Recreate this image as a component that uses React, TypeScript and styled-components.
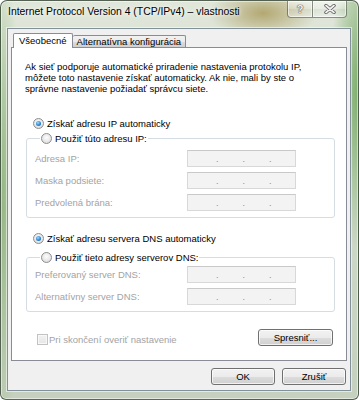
import React from "react";
import styled, { createGlobalStyle } from "styled-components";

const GlobalStyle = createGlobalStyle`
  html, body { margin: 0; padding: 0; background: #ffffff; }
  * { box-sizing: border-box; }
`;

const Window = styled.div`
  width: 359px;
  height: 400px;
  display: flex;
  flex-direction: column;
  padding: 0 7px 8px 6px;
  border: 1px solid rgba(45, 60, 45, 0.75);
  border-radius: 7px 7px 6px 6px;
  background:
    radial-gradient(ellipse 55px 26px at 262px 12px, rgba(168, 152, 88, 0.8), transparent),
    radial-gradient(ellipse 30px 160px at 359px 90px, rgba(110, 165, 92, 0.9), transparent),
    radial-gradient(ellipse 22px 240px at 0px 200px, rgba(135, 175, 115, 0.85), transparent),
    linear-gradient(to bottom, #e0e7da 0%, #d2dccc 35%, #c6d0bf 100%);
  box-shadow: inset 0 0 0 1px rgba(255, 255, 255, 0.5);
  font-family: "Liberation Sans", Arial, sans-serif;
  font-size: 9.5px;
  color: #000;
`;

const TitleBar = styled.div`
  height: 27px;
  display: flex;
  align-items: flex-start;
`;

const Title = styled.div`
  margin: 4px 0 0 1px;
  font-size: 10.4px;
  line-height: 14px;
  white-space: nowrap;
  text-shadow: 0 0 6px rgba(255, 255, 255, 0.95), 0 0 3px rgba(255, 255, 255, 0.9);
`;

const CaptionGroup = styled.div`
  margin: -1px 4px 0 auto;
  display: flex;
`;

const CaptionButton = styled.div<{ $w: number; $side: "left" | "right" }>`
  width: ${(p) => p.$w}px;
  height: 18px;
  display: flex;
  align-items: center;
  justify-content: center;
  border: 1px solid rgba(50, 60, 50, 0.55);
  ${(p) => (p.$side === "left" ? "border-right: none;" : "")}
  border-radius: ${(p) => (p.$side === "left" ? "0 0 0 4px" : "0 0 4px 0")};
  background: linear-gradient(
    to bottom,
    rgba(255, 255, 255, 0.55) 0%,
    rgba(255, 255, 255, 0.25) 50%,
    rgba(210, 215, 205, 0.25) 51%,
    rgba(255, 255, 255, 0.35) 100%
  );
  box-shadow: inset 0 0 0 1px rgba(255, 255, 255, 0.55);
`;

const HelpGlyph = styled.span`
  font-family: "Liberation Sans", Arial, sans-serif;
  font-weight: bold;
  font-size: 11px;
  line-height: 11px;
  color: #f4f4f4;
  text-shadow: 0 0 1px #555, 0 0 1px #555, 0 0 1px #555;
`;

const Client = styled.div`
  flex: 1;
  display: flex;
  flex-direction: column;
  background: #f0f0f0;
  border: 1px solid #82909a;
  box-shadow: 0 0 0 1px rgba(255, 255, 255, 0.55);
  padding: 4px 3px 5px 3px;
`;

const TabStrip = styled.div`
  height: 14px;
  display: flex;
  align-items: flex-end;
  padding-left: 2px;
  position: relative;
  z-index: 1;
`;

const Tab = styled.div<{ $active?: boolean }>`
  height: ${(p) => (p.$active ? 15 : 12)}px;
  margin-bottom: ${(p) => (p.$active ? -1 : 0)}px;
  border: 1px solid #898c95;
  border-bottom: none;
  ${(p) => (p.$active ? "" : "border-left: none;")}
  border-radius: 2px 2px 0 0;
  padding: 0 ${(p) => (p.$active ? 5 : 4)}px;
  display: flex;
  align-items: ${(p) => (p.$active ? "flex-start" : "center")};
  padding-top: ${(p) => (p.$active ? 1 : 0)}px;
  line-height: 11px;
  white-space: nowrap;
  background: ${(p) =>
    p.$active
      ? "#ffffff"
      : "linear-gradient(to bottom, #f2f2f2 0%, #ebebeb 50%, #dddddd 51%, #cfcfcf 100%)"};
`;

const Panel = styled.div`
  flex: 1;
  display: flex;
  flex-direction: column;
  background: #ffffff;
  border: 1px solid #898c95;
  padding: 13px 11px 0 13px;
`;

const Paragraph = styled.p`
  margin: 0;
  line-height: 11px;
  white-space: nowrap;
`;

const OptionRow = styled.label<{ $top: number }>`
  display: flex;
  align-items: center;
  gap: 3px;
  height: 14px;
  margin: ${(p) => p.$top}px 0 0 8px;
  white-space: nowrap;
`;

const Radio = styled.span<{ $checked?: boolean }>`
  flex: none;
  width: 11px;
  height: 11px;
  border-radius: 50%;
  border: 1px solid #8c8e8e;
  background: radial-gradient(circle at 50% 40%, #fdfdfd 0%, #e8e8e8 55%, #cfcfcf 100%);
  display: inline-flex;
  align-items: center;
  justify-content: center;
  &::after {
    content: "";
    width: 5px;
    height: 5px;
    border-radius: 50%;
    display: ${(p) => (p.$checked ? "block" : "none")};
    background: radial-gradient(circle at 40% 35%, #9fdcff 0%, #2c86d6 55%, #0c4c8e 100%);
  }
`;

const Group = styled.fieldset<{ $top: number; $padTop: number }>`
  margin: ${(p) => p.$top}px 0 0 1px;
  border: 1px solid #d5dde2;
  border-radius: 3px;
  padding: ${(p) => p.$padTop}px 0 6px 8px;
  min-width: 0;
`;

const Legend = styled.legend`
  margin-left: 5px;
  padding: 0 1px;
  height: 14px;
  display: flex;
  align-items: center;
  gap: 3px;
  white-space: nowrap;
`;

const FieldGrid = styled.div`
  display: grid;
  grid-template-columns: 152px 109px;
  grid-auto-rows: 17px;
  row-gap: 5px;
  align-items: center;
`;

const FieldLabel = styled.span`
  color: #a3a3a3;
  white-space: nowrap;
`;

const IpBox = styled.div`
  height: 17px;
  border: 1px solid #d8d8d8;
  border-top-color: #c9c9c9;
  background: #f3f3f3;
  display: flex;
  align-items: center;
  padding: 2px 0 0 28px;
  gap: 24px;
  color: #8a8a8a;
  font-size: 9px;
  line-height: 9px;
`;

const BottomRow = styled.div`
  margin-top: 17px;
  display: flex;
  align-items: flex-end;
  justify-content: space-between;
  padding-right: 2px;
`;

const CheckRow = styled.label`
  display: flex;
  align-items: center;
  gap: 1px;
  margin: 0 0 1px 12px;
  color: #a3a3a3;
  white-space: nowrap;
`;

const CheckBox = styled.span`
  width: 11px;
  height: 11px;
  border: 1px solid #c2c2c2;
  background: linear-gradient(to bottom, #f2f2f2, #e6e6e6);
  box-shadow: inset 0 0 0 1px #f8f8f8;
`;

const Button = styled.button<{ $w: number }>`
  width: ${(p) => p.$w}px;
  height: 17px;
  padding: 0;
  border: 1px solid #707070;
  border-radius: 3px;
  background: linear-gradient(to bottom, #f2f2f2 0%, #ebebeb 50%, #dddddd 51%, #cfcfcf 100%);
  box-shadow: inset 0 0 0 1px rgba(255, 255, 255, 0.7);
  font-family: "Liberation Sans", Arial, sans-serif;
  font-size: 9.5px;
  color: #000;
  line-height: 15px;
`;

const Footer = styled.div`
  margin: 7px 1px 0 0;
  display: flex;
  justify-content: flex-end;
  gap: 7px;
`;

const CloseIcon = () => (
  <svg width="12" height="10" viewBox="0 0 12 10">
    <path
      d="M2 1.5 L10 8.5 M10 1.5 L2 8.5"
      stroke="#5a5a5a"
      strokeWidth="3.4"
      strokeLinecap="round"
      fill="none"
    />
    <path
      d="M2 1.5 L10 8.5 M10 1.5 L2 8.5"
      stroke="#f2f2f2"
      strokeWidth="1.8"
      strokeLinecap="round"
      fill="none"
    />
  </svg>
);

const IpField = () => (
  <IpBox>
    <span>.</span>
    <span>.</span>
    <span>.</span>
  </IpBox>
);

export default function App() {
  return (
    <>
      <GlobalStyle />
      <Window>
        <TitleBar>
          <Title>Internet Protocol Version 4 (TCP/IPv4) – vlastnosti</Title>
          <CaptionGroup>
            <CaptionButton $w={25} $side="left">
              <HelpGlyph>?</HelpGlyph>
            </CaptionButton>
            <CaptionButton $w={35} $side="right">
              <CloseIcon />
            </CaptionButton>
          </CaptionGroup>
        </TitleBar>
        <Client>
          <TabStrip>
            <Tab $active>Všeobecné</Tab>
            <Tab>Alternatívna konfigurácia</Tab>
          </TabStrip>
          <Panel>
            <Paragraph>
              Ak sieť podporuje automatické priradenie nastavenia protokolu IP,
              <br />
              môžete toto nastavenie získať automaticky. Ak nie, mali by ste o
              <br />
              správne nastavenie požiadať správcu siete.
            </Paragraph>
            <OptionRow $top={22}>
              <Radio $checked />
              Získať adresu IP automaticky
            </OptionRow>
            <Group $top={1} $padTop={5}>
              <Legend>
                <Radio />
                Použiť túto adresu IP:
              </Legend>
              <FieldGrid>
                <FieldLabel>Adresa IP:</FieldLabel>
                <IpField />
                <FieldLabel>Maska podsiete:</FieldLabel>
                <IpField />
                <FieldLabel>Predvolená brána:</FieldLabel>
                <IpField />
              </FieldGrid>
            </Group>
            <OptionRow $top={13}>
              <Radio $checked />
              Získať adresu servera DNS automaticky
            </OptionRow>
            <Group $top={5} $padTop={2}>
              <Legend>
                <Radio />
                Použiť tieto adresy serverov DNS:
              </Legend>
              <FieldGrid>
                <FieldLabel>Preferovaný server DNS:</FieldLabel>
                <IpField />
                <FieldLabel>Alternatívny server DNS:</FieldLabel>
                <IpField />
              </FieldGrid>
            </Group>
            <BottomRow>
              <CheckRow>
                <CheckBox />
                Pri skončení overiť nastavenie
              </CheckRow>
              <Button $w={75}>Spresniť...</Button>
            </BottomRow>
          </Panel>
          <Footer>
            <Button $w={64}>OK</Button>
            <Button $w={64}>Zrušiť</Button>
          </Footer>
        </Client>
      </Window>
    </>
  );
}
